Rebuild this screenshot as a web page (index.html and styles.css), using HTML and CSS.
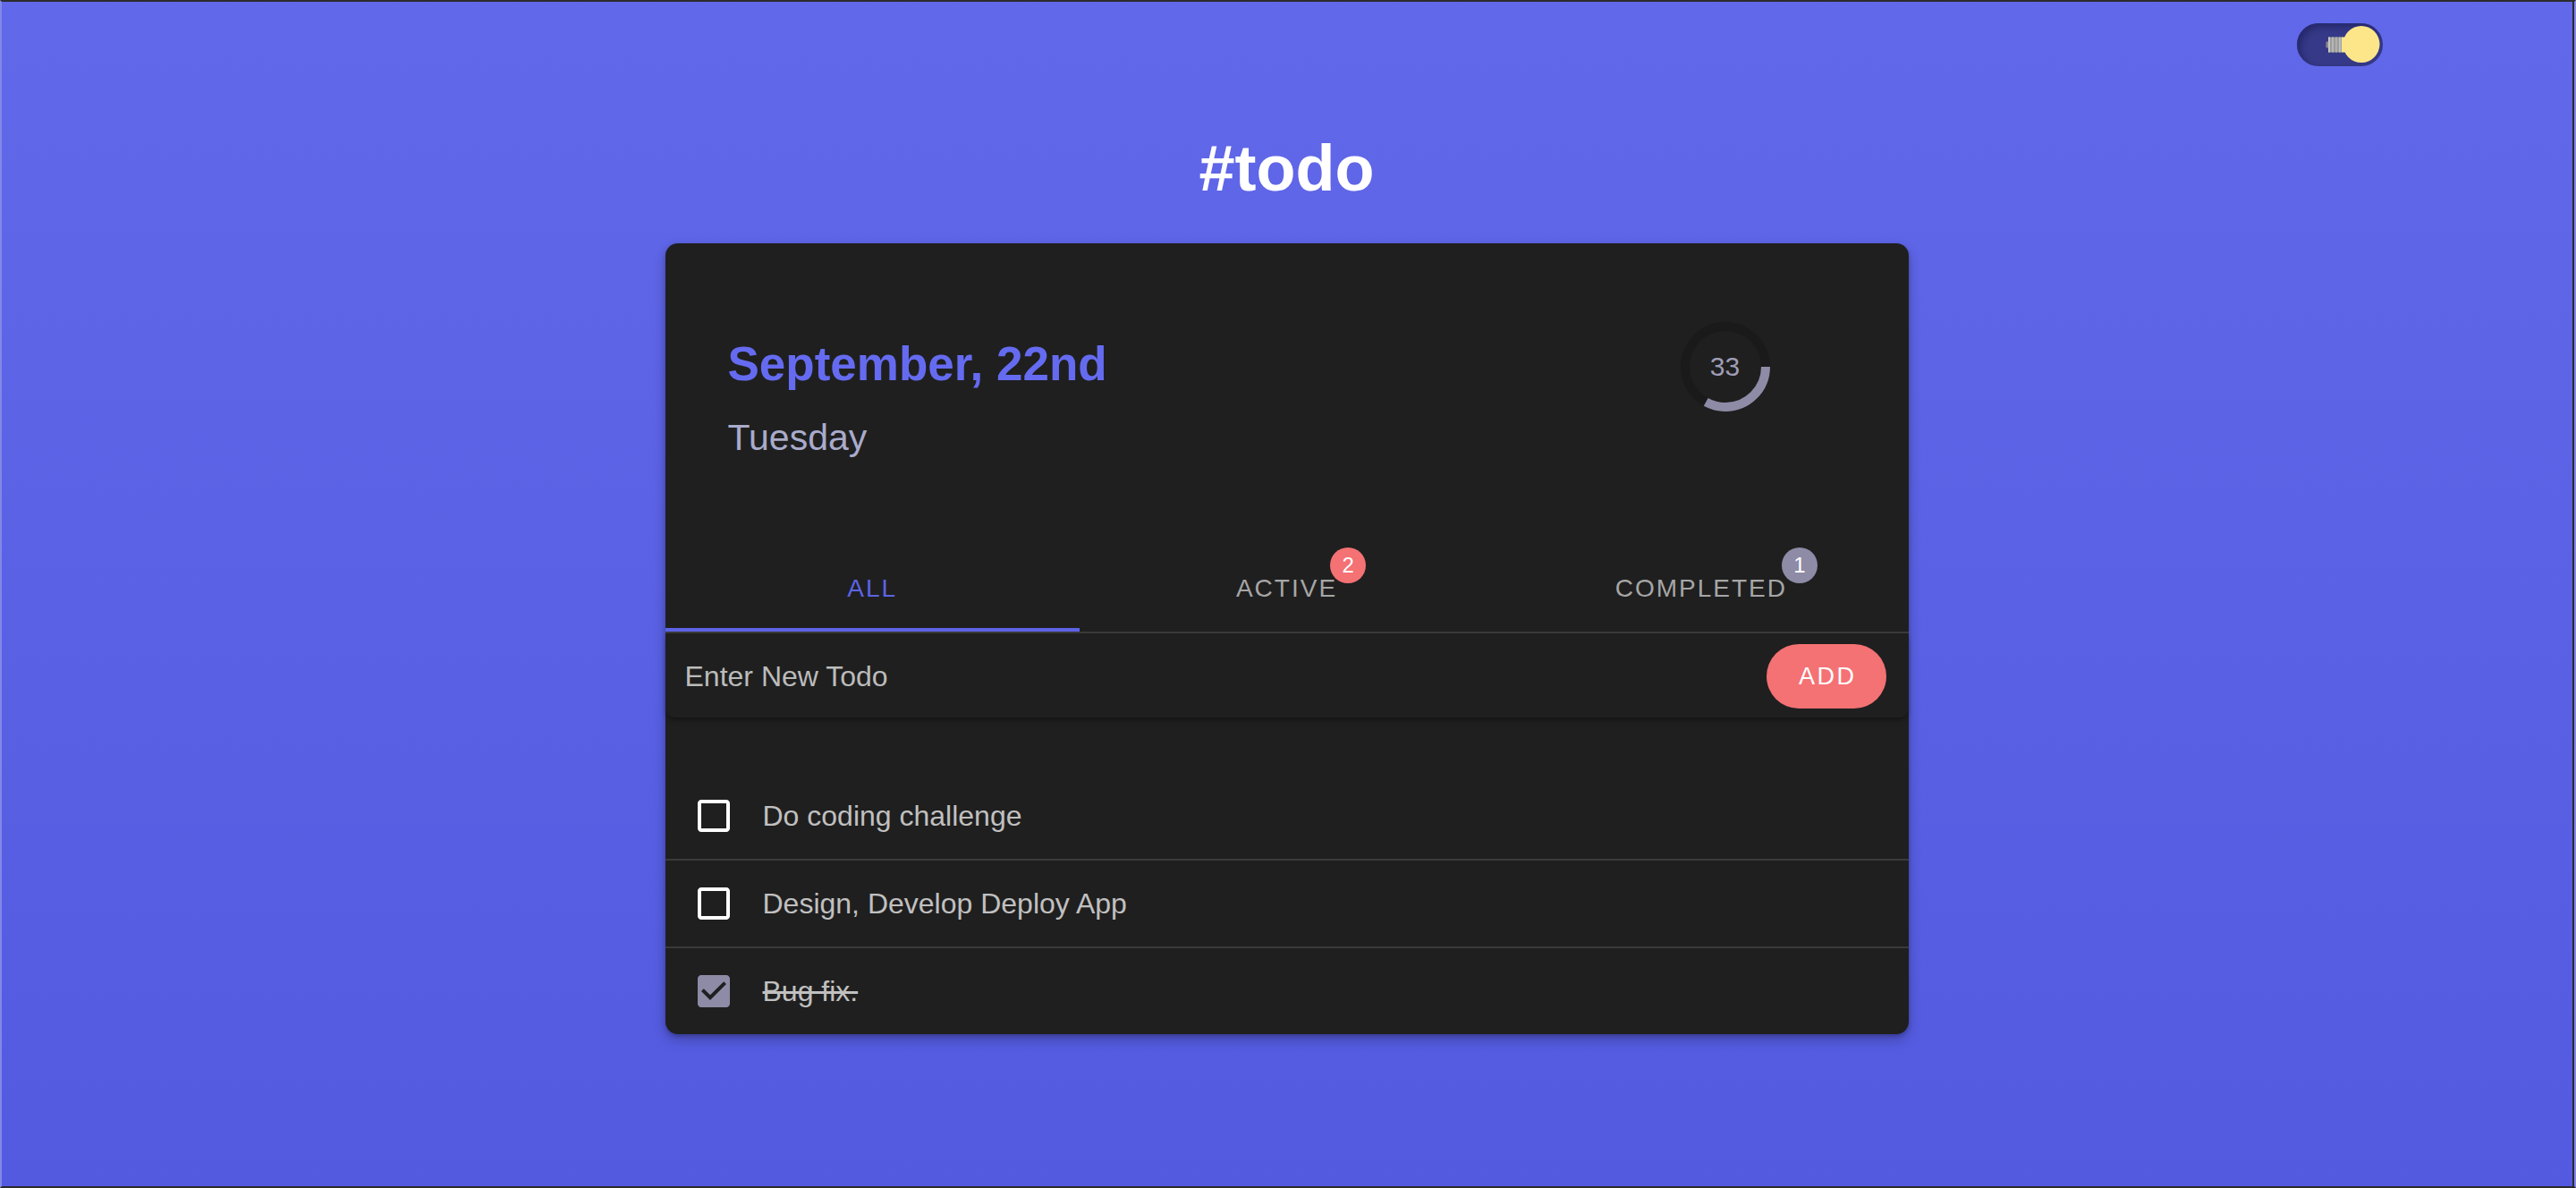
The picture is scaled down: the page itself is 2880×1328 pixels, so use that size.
FILE: index.html
```html
<!DOCTYPE html>
<html lang="en">
<head>
<meta charset="utf-8">
<title>#todo</title>
<link rel="stylesheet" href="styles.css">
</head>
<body>
<div class="screen">
  <header class="topbar">
    <button class="toggle" aria-label="Toggle theme">
      <svg class="bulb" width="96" height="48" viewBox="0 0 96 48">
        <rect x="32.5" y="20.5" width="4" height="7" rx="1.2" fill="#8a8a8a"/>
        <rect x="35" y="15.5" width="16" height="17" fill="#9c9c9c"/>
        <rect x="35" y="15.5" width="2" height="17" fill="#c4c4c4"/>
        <rect x="39" y="15.5" width="2" height="17" fill="#b6b6b6"/>
        <rect x="43" y="15.5" width="2" height="17" fill="#b0b0b0"/>
        <rect x="47" y="15.5" width="2" height="17" fill="#bdbdbd"/>
        <rect x="50" y="15.5" width="8" height="17" fill="#fde68a"/>
        <circle cx="72" cy="23.5" r="20.5" fill="#fde68a"/>
      </svg>
    </button>
  </header>

  <h1 class="title">#todo</h1>

  <main class="card">
    <section class="head">
      <div class="date">
        <div class="date-main">September, 22nd</div>
        <div class="date-day">Tuesday</div>
      </div>
      <div class="progress">
        <svg width="100" height="100" viewBox="0 0 100 100">
          <circle cx="50" cy="50" r="45" fill="none" stroke="#1a1a1a" stroke-width="10"/>
          <circle cx="50" cy="50" r="45" fill="none" stroke="#8e8ba6" stroke-width="10" stroke-dasharray="93.3 282.74"/>
        </svg>
        <span class="progress-value">33</span>
      </div>
    </section>

    <nav class="tabs">
      <div class="tab active"><span class="tab-label">All</span></div>
      <div class="tab"><span class="tab-label">Active<span class="badge badge-red">2</span></span></div>
      <div class="tab"><span class="tab-label">Completed<span class="badge badge-gray">1</span></span></div>
    </nav>

    <form class="new-todo">
      <input class="new-todo-input" type="text" placeholder="Enter New Todo">
      <button class="add-btn" type="button">ADD</button>
    </form>

    <ul class="todos">
      <li class="todo">
        <svg class="check" width="48" height="48" viewBox="0 0 24 24"><path fill="#ffffff" d="M19 5v14H5V5h14m0-2H5c-1.1 0-2 .9-2 2v14c0 1.1.9 2 2 2h14c1.1 0 2-.9 2-2V5c0-1.1-.9-2-2-2z"/></svg>
        <span class="todo-text">Do coding challenge</span>
      </li>
      <li class="todo">
        <svg class="check" width="48" height="48" viewBox="0 0 24 24"><path fill="#ffffff" d="M19 5v14H5V5h14m0-2H5c-1.1 0-2 .9-2 2v14c0 1.1.9 2 2 2h14c1.1 0 2-.9 2-2V5c0-1.1-.9-2-2-2z"/></svg>
        <span class="todo-text">Design, Develop Deploy App</span>
      </li>
      <li class="todo done">
        <svg class="check" width="48" height="48" viewBox="0 0 24 24"><path fill="#8e8ba6" d="M19 3H5c-1.11 0-2 .9-2 2v14c0 1.1.89 2 2 2h14c1.11 0 2-.9 2-2V5c0-1.1-.89-2-2-2zm-9 14l-5-5 1.41-1.41L10 14.17l7.59-7.59L19 8l-9 9z"/></svg>
        <span class="todo-text">Bug fix.</span>
      </li>
    </ul>
  </main>
</div>
</body>
</html>
```

FILE: styles.css
```css
html, body {
  margin: 0;
  padding: 0;
}

body {
  font-family: "Liberation Sans", Arial, Helvetica, sans-serif;
}

.screen {
  box-sizing: border-box;
  height: 1328px;
  padding-right: 3px;
  border-top: 2px solid #2b2b2b;
  border-bottom: 2px solid #2b2b2b;
  border-left: 2px solid #8388e9;
  border-right: 2px solid #8388e9;
  box-shadow: inset -2px 0 0 #2b2b2b;
  background: linear-gradient(180deg, #6168e9 0%, #5a61e4 50%, #535ae0 100%);
  display: flex;
  flex-direction: column;
  align-items: center;
  overflow: hidden;
}

.topbar {
  align-self: stretch;
  display: flex;
  justify-content: flex-end;
  padding: 24px 211px 0 0;
}

.toggle {
  width: 96px;
  height: 48px;
  padding: 0;
  border: none;
  border-radius: 24px;
  background: #353987;
  box-shadow: inset 4px 4px 7px rgba(18, 20, 70, 0.45);
  display: block;
  cursor: pointer;
}

.bulb {
  display: block;
}

.title {
  margin: 78px 0 0;
  font-size: 72px;
  line-height: 72px;
  font-weight: 700;
  color: #ffffff;
}

.card {
  margin-top: 48px;
  width: 1390px;
  background: #1f1f1f;
  border-radius: 14px;
  box-shadow: 0 6px 14px rgba(0, 0, 0, 0.25), 0 2px 4px rgba(0, 0, 0, 0.2);
}

.head {
  display: flex;
  justify-content: space-between;
  align-items: flex-start;
  padding: 88px 155px 97px 70px;
}

.date-main {
  margin-top: 16px;
  font-size: 53px;
  line-height: 62px;
  font-weight: 700;
  color: #656bf0;
}

.date-day {
  margin-top: 27px;
  font-size: 41px;
  line-height: 48px;
  color: #a9abcb;
}

.progress {
  display: grid;
  width: 100px;
  height: 100px;
  place-items: center;
}

.progress svg,
.progress-value {
  grid-area: 1 / 1;
}

.progress svg {
  display: block;
}

.progress-value {
  font-size: 30px;
  line-height: 30px;
  color: #9f9db6;
}

.tabs {
  display: grid;
  grid-template-columns: repeat(3, 1fr);
  border-bottom: 2px solid #3a3a3a;
}

.tab {
  height: 96px;
  display: flex;
  align-items: center;
  justify-content: center;
  font-size: 28px;
  line-height: 32px;
  letter-spacing: 2px;
  text-transform: uppercase;
  color: #a6a6a6;
}

.tab.active {
  color: #5d63e6;
  box-shadow: inset 0 -4px 0 #5d63e6;
}

.tab-label {
  position: relative;
}

.badge {
  position: absolute;
  top: -30px;
  right: -32px;
  width: 40px;
  height: 40px;
  border-radius: 50%;
  display: flex;
  align-items: center;
  justify-content: center;
  font-size: 24px;
  line-height: 24px;
  letter-spacing: 0;
  color: #ffffff;
}

.badge-red {
  background: #f47174;
}

.badge-gray {
  background: #8e8ba6;
  right: -34px;
}

.new-todo {
  margin: 0;
  display: flex;
  align-items: center;
  padding: 12px 25px 10px 22px;
  border-radius: 0 0 10px 10px;
  box-shadow: 0 4px 6px -2px rgba(0, 0, 0, 0.45);
}

.new-todo-input {
  flex: 1;
  min-width: 0;
  border: none;
  outline: none;
  padding: 0;
  background: transparent;
  font-family: inherit;
  font-size: 32px;
  line-height: 40px;
  color: #d0d0d0;
}

.new-todo-input::placeholder {
  color: #bbbbbb;
  opacity: 1;
}

.add-btn {
  height: 72px;
  padding: 0 33px 0 36px;
  border: none;
  border-radius: 36px;
  background: #f47174;
  color: #ffffff;
  font-family: inherit;
  font-size: 27px;
  letter-spacing: 2.5px;
  cursor: pointer;
}

.todos {
  list-style: none;
  margin: 0;
  padding: 62px 0 0;
}

.todo {
  height: 96px;
  display: flex;
  align-items: center;
  gap: 31px;
  padding-left: 30px;
}

.todo + .todo {
  border-top: 2px solid #3a3a3a;
}

.check {
  display: block;
  flex: none;
}

.todo-text {
  font-size: 32px;
  line-height: 36px;
  color: #c0c0c0;
}

.todo.done .todo-text {
  text-decoration: line-through;
}
```
